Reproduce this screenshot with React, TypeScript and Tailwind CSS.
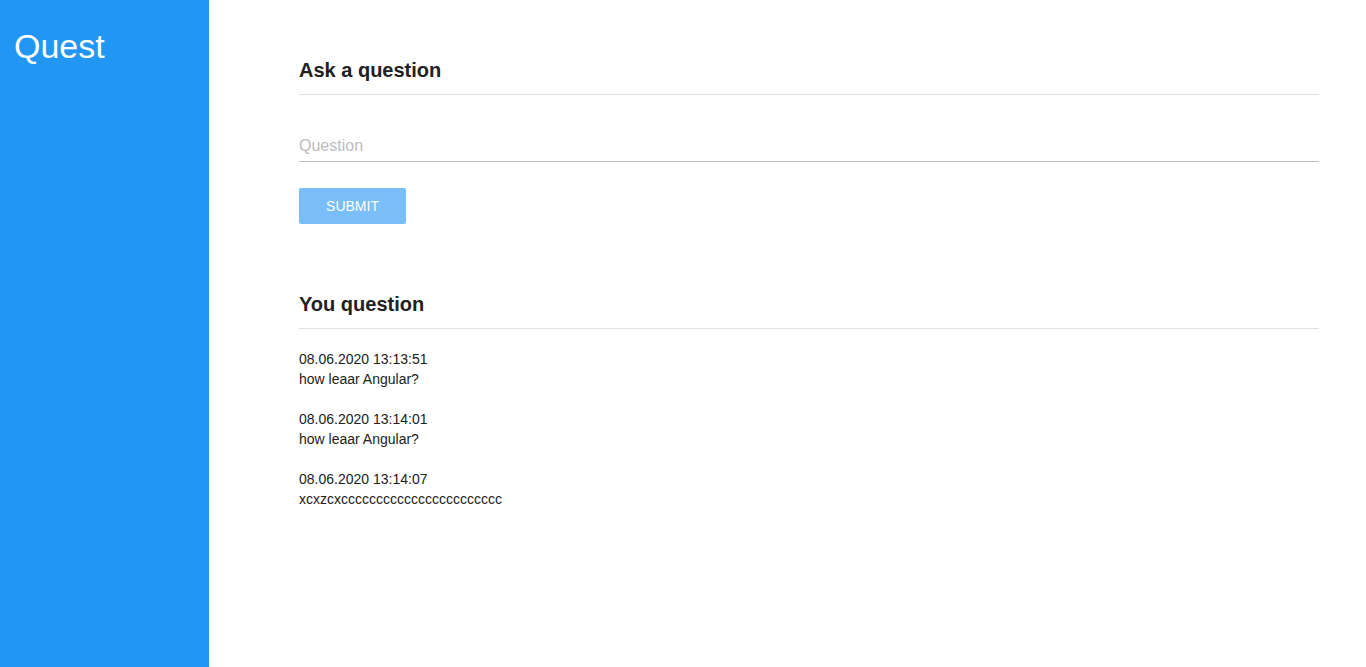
import React from "react";

type Question = {
  date: string;
  text: string;
};

const questions: Question[] = [
  { date: "08.06.2020 13:13:51", text: "how leaar Angular?" },
  { date: "08.06.2020 13:14:01", text: "how leaar Angular?" },
  { date: "08.06.2020 13:14:07", text: "xcxzcxccccccccccccccccccccccc" },
];

export default function App() {
  return (
    <div className="flex min-h-[667px] w-full bg-white font-['Liberation_Sans',Arial,sans-serif] text-[#212121]">
      {/* Sidebar */}
      <aside className="w-[209px] shrink-0 bg-[#2196f3] px-[14px] pt-[24px]">
        <h1 className="text-[34px] leading-[44px] text-white">Quest</h1>
      </aside>

      {/* Main */}
      <main className="flex-1 pl-[90px] pt-[56px]">
        <div className="w-[1020px]">
          <h2 className="border-b border-[#e0e0e0] pb-[10px] text-[20px] font-bold leading-[28px]">
            Ask a question
          </h2>

          <input
            type="text"
            placeholder="Question"
            className="mt-[34px] block h-[33px] w-full border-b border-[#bdbdbd] bg-transparent pt-[2px] text-[16px] outline-none placeholder:text-[#bdbdbd]"
          />

          <button
            type="button"
            disabled
            className="mt-[26px] h-[36px] w-[107px] rounded-[2px] bg-[#79bef8] text-[14px] font-medium uppercase text-white"
          >
            Submit
          </button>

          <h2 className="mt-[66px] border-b border-[#e0e0e0] pb-[10px] text-[20px] font-bold leading-[28px]">
            You question
          </h2>

          <ul className="mt-[20px] flex flex-col gap-[20px] text-[14px] leading-[20px]">
            {questions.map((q, idx) => (
              <li key={idx}>
                <div>{q.date}</div>
                <div>{q.text}</div>
              </li>
            ))}
          </ul>
        </div>
      </main>
    </div>
  );
}
